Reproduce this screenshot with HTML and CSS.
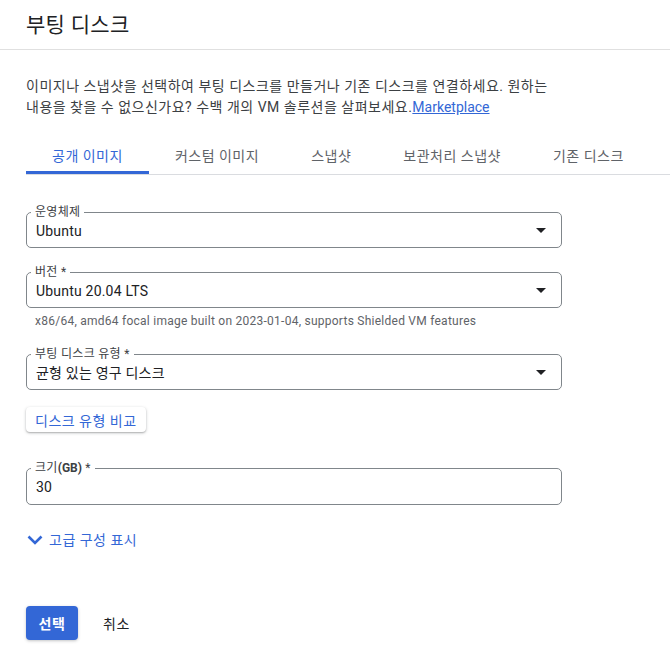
FILE: index.html
```html
<!DOCTYPE html>
<html lang="ko">
<head>
<meta charset="utf-8">
<title>부팅 디스크</title>
<link rel="stylesheet" href="styles.css">
</head>
<body>
<div class="panel">
  <header class="header">
    <h1 class="title">부팅 디스크</h1>
  </header>
  <div class="content">
    <p class="desc">이미지나 스냅샷을 선택하여 부팅 디스크를 만들거나 기존 디스크를 연결하세요. 원하는 내용을 찾을 수 없으신가요? 수백 개의 VM 솔루션을 살펴보세요.<a class="link" href="#">Marketplace</a></p>

    <nav class="tabs">
      <div class="tab active">공개 이미지</div>
      <div class="tab">커스텀 이미지</div>
      <div class="tab">스냅샷</div>
      <div class="tab">보관처리 스냅샷</div>
      <div class="tab">기존 디스크</div>
    </nav>

    <div class="form">
      <div class="field">
        <span class="label">운영체제</span>
        <span class="value">Ubuntu</span>
        <span class="arrow"></span>
      </div>

      <div class="group">
        <div class="field">
          <span class="label">버전 *</span>
          <span class="value">Ubuntu 20.04 LTS</span>
          <span class="arrow"></span>
        </div>
        <div class="hint">x86/64, amd64 focal image built on 2023-01-04, supports Shielded VM features</div>
      </div>

      <div class="field field-type">
        <span class="label">부팅 디스크 유형 *</span>
        <span class="value">균형 있는 영구 디스크</span>
        <span class="arrow"></span>
      </div>

      <div class="compare-row">
        <button class="compare">디스크 유형 비교</button>
      </div>

      <div class="field field-size">
        <span class="label">크기<b class="unit">(GB)</b> *</span>
        <span class="value">30</span>
      </div>

      <div class="advanced">
        <svg class="chev" viewBox="0 0 16 10" width="16" height="10"><polyline points="1.5,1.5 8,8 14.5,1.5" fill="none" stroke="currentColor" stroke-width="2.6"/></svg>
        <span>고급 구성 표시</span>
      </div>
    </div>

    <div class="actions">
      <button class="primary">선택</button>
      <button class="cancel">취소</button>
    </div>
  </div>
</div>
</body>
</html>
```

FILE: styles.css
```css
* { box-sizing: border-box; }

html, body {
  margin: 0;
  padding: 0;
  background: #ffffff;
}

body {
  font-family: Roboto, "Noto Sans CJK KR", sans-serif;
  color: #202124;
  width: 670px;
  height: 667px;
  overflow: hidden;
}

.header {
  height: 50px;
  border-bottom: 1px solid #e0e0e0;
  padding-left: 26px;
  display: flex;
  align-items: center;
}

.title {
  margin: 0;
  font-size: 21px;
  font-weight: 400;
  line-height: 28px;
  color: #202124;
  letter-spacing: 0.3px;
}

.content {
  padding-left: 26px;
}

.desc {
  margin: 26px 0 0 0;
  width: 536px;
  font-size: 14px;
  line-height: 21px;
  color: #3c4043;
  word-break: keep-all;
  letter-spacing: 0.5px;
}

.link {
  color: #3367d6;
  text-decoration: underline;
  letter-spacing: 0;
}

.tabs {
  margin-top: 16px;
  display: flex;
  border-bottom: 1px solid #dadce0;
}

.tab {
  height: 40px;
  padding: 0 26px;
  display: flex;
  align-items: center;
  padding-top: 2px;
  font-size: 14px;
  color: #5f6368;
  white-space: nowrap;
  letter-spacing: 0.5px;
}

.tab.active {
  color: #3367d6;
  box-shadow: inset 0 -3px 0 #3367d6;
}

.form {
  width: 536px;
  padding-top: 37px;
  display: flex;
  flex-direction: column;
}

.field {
  position: relative;
  height: 36px;
  border: 1px solid #80868b;
  border-radius: 5px;
  display: flex;
  align-items: center;
  padding: 0 10px 0 9px;
}

.group {
  margin-top: 24px;
}

.field-type {
  margin-top: 25px;
}

.label {
  position: absolute;
  top: -9px;
  left: 4px;
  padding: 0 4px;
  background: #ffffff;
  font-size: 12px;
  line-height: 16px;
  color: #3c4043;
  letter-spacing: 0.3px;
}

.unit {
  font-weight: 700;
  letter-spacing: 0;
}

.value {
  flex: 1;
  font-size: 14px;
  line-height: 20px;
  color: #202124;
  padding-top: 1px;
  letter-spacing: 0.2px;
}

.arrow {
  width: 0;
  height: 0;
  border-left: 5px solid transparent;
  border-right: 5px solid transparent;
  border-top: 5px solid #202124;
  margin-right: 5px;
}

.hint {
  padding: 5px 0 0 9px;
  font-size: 12px;
  line-height: 16px;
  color: #5f6368;
  letter-spacing: 0.25px;
}

.compare-row {
  margin-top: 17px;
  display: flex;
}

.compare {
  height: 25px;
  padding: 0 9px;
  border: none;
  border-radius: 4px;
  background: #ffffff;
  color: #3367d6;
  font-family: inherit;
  font-size: 14px;
  letter-spacing: 0.5px;
  box-shadow: 0 1px 3px rgba(60, 64, 67, 0.35), 0 1px 1px rgba(60, 64, 67, 0.15);
}

.field-size {
  margin-top: 36px;
  height: 37px;
}

.advanced {
  margin-top: 25px;
  display: flex;
  align-items: center;
  gap: 6px;
  color: #3367d6;
  font-size: 14px;
  line-height: 20px;
  letter-spacing: 0.5px;
}

.chev {
  display: block;
  margin-left: 1px;
}

.actions {
  margin-top: 56px;
  display: flex;
  align-items: center;
}

.primary {
  height: 34px;
  width: 52px;
  border: none;
  border-radius: 4px;
  background: #3367d6;
  color: #ffffff;
  font-family: inherit;
  font-size: 14px;
  font-weight: 700;
  letter-spacing: 0.5px;
  box-shadow: 0 1px 3px rgba(60, 64, 67, 0.3);
}

.cancel {
  margin-left: 16px;
  height: 34px;
  padding: 0 9px;
  border: none;
  background: transparent;
  color: #202124;
  font-family: inherit;
  font-size: 14px;
  letter-spacing: 0.5px;
}
```
